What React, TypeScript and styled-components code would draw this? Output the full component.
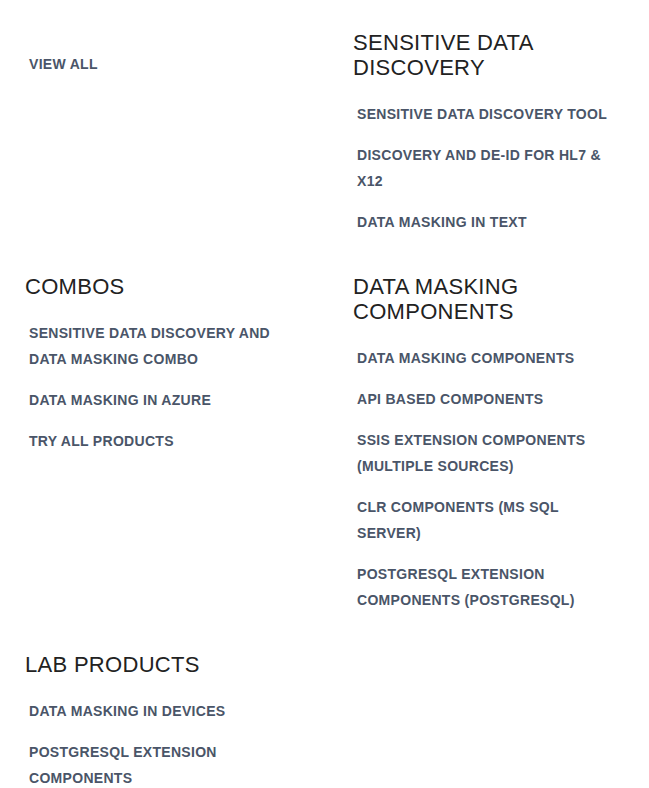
import React from "react";
import styled, { createGlobalStyle } from "styled-components";

const Global = createGlobalStyle`
  html, body { margin: 0; padding: 0; background: #ffffff; }
  body { font-family: "Liberation Sans", Arial, Helvetica, sans-serif; }
`;

const Page = styled.div`
  display: grid;
  grid-template-columns: 270px 270px;
  column-gap: 58px;
  row-gap: 39px;
  align-items: start;
  padding: 30px 0 0 25px;
`;

const Section = styled.section<{ $offset?: number }>`
  display: flex;
  flex-direction: column;
  padding-top: ${(p) => p.$offset ?? 0}px;
`;

const Heading = styled.h3`
  margin: 0 0 21px 0;
  font-size: 22px;
  line-height: 25px;
  font-weight: 400;
  letter-spacing: 0.3px;
  color: #222222;
  text-transform: uppercase;
`;

const LinkList = styled.ul`
  list-style: none;
  margin: 0;
  padding: 0 4px;
  display: flex;
  flex-direction: column;
  gap: 15px;
`;

const LinkItem = styled.li`
  margin: 0;
`;

const MenuLink = styled.a`
  font-size: 14px;
  line-height: 26px;
  font-weight: 700;
  letter-spacing: 0.3px;
  color: #4a5568;
  text-decoration: none;
  text-transform: uppercase;
`;

type Group = { title?: string; links: string[]; offset?: number };

const groups: Group[] = [
  { links: ["View all"], offset: 21 },
  {
    title: "Sensitive Data Discovery",
    links: [
      "Sensitive Data Discovery Tool",
      "Discovery and De-ID for HL7 & X12",
      "Data Masking in Text",
    ],
  },
  {
    title: "Combos",
    links: [
      "Sensitive Data Discovery and Data Masking Combo",
      "Data Masking in Azure",
      "Try All Products",
    ],
  },
  {
    title: "Data Masking Components",
    links: [
      "Data Masking Components",
      "API Based Components",
      "SSIS Extension Components (Multiple Sources)",
      "CLR Components (MS SQL Server)",
      "PostgreSQL Extension Components (PostgreSQL)",
    ],
  },
  {
    title: "Lab Products",
    links: ["Data Masking in Devices", "PostgreSQL Extension Components"],
  },
];

export default function App() {
  return (
    <>
      <Global />
      <Page>
        {groups.map((g, i) => (
          <Section key={i} $offset={g.offset}>
            {g.title && <Heading>{g.title}</Heading>}
            <LinkList>
              {g.links.map((l) => (
                <LinkItem key={l}>
                  <MenuLink href="#">{l}</MenuLink>
                </LinkItem>
              ))}
            </LinkList>
          </Section>
        ))}
      </Page>
    </>
  );
}
